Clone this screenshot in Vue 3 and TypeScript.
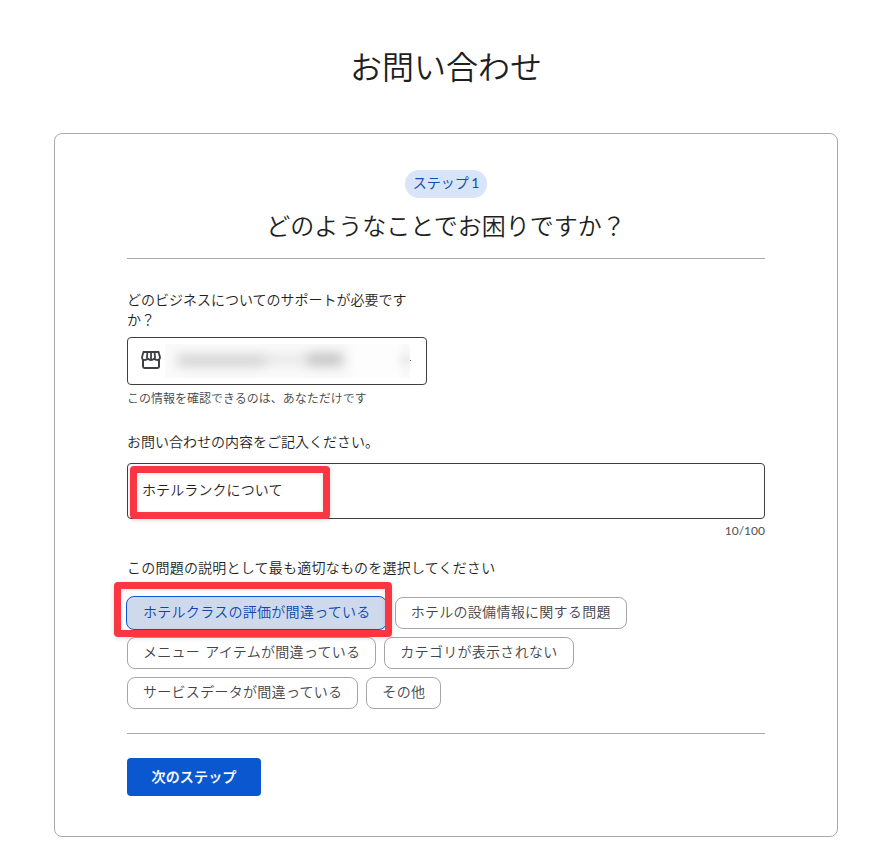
<script setup lang="ts">
import { ref } from 'vue'

const subject = ref<string>('ホテルランクについて')
const selected = ref<number>(0)
const topics: string[] = [
  'ホテルクラスの評価が間違っている',
  'ホテルの設備情報に関する問題',
  'メニュー アイテムが間違っている',
  'カテゴリが表示されない',
  'サービスデータが間違っている',
  'その他',
]
</script>

<template>
  <main class="page">
    <h1 class="title">お問い合わせ</h1>
    <section class="card">
      <header class="head">
        <span class="step">ステップ 1</span>
        <h2 class="question">どのようなことでお困りですか？</h2>
      </header>

      <div class="label business-label">どのビジネスについてのサポートが必要ですか？</div>
      <div class="select">
        <svg class="store" viewBox="0 0 20 18" width="20" height="18" fill="none" stroke="#3f4043">
          <path d="M2 8.5V15.6Q2 17 3.4 17H16.6Q18 17 18 15.6V8.5" stroke-width="2" />
          <path d="M2.5 1H17.5L19 6.2Q19 9 16.3 9Q14.3 9 13.2 7.6Q12 9 10 9Q8 9 6.8 7.6Q5.7 9 3.7 9Q1 9 1 6.2Z" stroke-width="1.8" />
          <path d="M6.4 1L5.9 7.5M10 1V8.5M13.6 1L14.1 7.5" stroke-width="1.8" />
        </svg>
        <div class="masked">
          <span class="smear first"></span>
          <span class="smear middle"></span>
          <span class="smear last"></span>
          <span class="smear arrow"></span>
        </div>
        <i class="tip"></i>
      </div>
      <div class="helper">この情報を確認できるのは、あなただけです</div>

      <label class="label subject-label" for="subject">お問い合わせの内容をご記入ください。</label>
      <div class="field">
        <input id="subject" v-model="subject" class="input" maxlength="100" />
        <span class="mark field-mark"></span>
      </div>
      <div class="count">{{ subject.length }}/100</div>

      <div class="label topic-label">この問題の説明として最も適切なものを選択してください</div>
      <div class="topics">
        <button
          v-for="(topic, i) in topics"
          :key="topic"
          type="button"
          class="chip"
          :class="{ active: selected === i }"
          @click="selected = i"
        >{{ topic }}</button>
        <span class="mark chip-mark"></span>
      </div>

      <footer class="foot">
        <button type="button" class="next">次のステップ</button>
      </footer>
    </section>
  </main>
</template>

<style>
body {
  background: #fff;
}
</style>

<style scoped>
.page {
  box-sizing: border-box;
  width: 887px;
  height: 845px;
  padding: 43px 49px 8px 54px;
  overflow: hidden;
  font-family: Lato, "Noto Sans CJK JP", sans-serif;
  font-weight: 350;
  color: #1f1f1f;
}
.title {
  margin: 0 0 42px;
  font-size: 32px;
  line-height: 48px;
  font-weight: 350;
  text-align: center;
}
.card {
  box-sizing: border-box;
  height: 704px;
  border: 1px solid #a9a9ab;
  border-radius: 8px;
  padding: 36px 72px 0;
}
.head {
  display: flex;
  flex-direction: column;
  align-items: center;
  box-sizing: border-box;
  height: 89px;
  border-bottom: 1px solid #a9a9ab;
}
.step {
  height: 28px;
  padding: 0 8px;
  border-radius: 14px;
  background: #d8e4f8;
  color: #174ea6;
  font-size: 14px;
  font-weight: 400;
  line-height: 25px;
  word-spacing: -1px;
}
.question {
  margin: 11px 0 0;
  font-size: 24px;
  line-height: 33px;
  font-weight: 350;
}
.label {
  display: block;
  font-size: 14px;
  line-height: 20px;
}
.business-label {
  width: 290px;
  margin-top: 31px;
}
.select {
  box-sizing: border-box;
  display: flex;
  align-items: center;
  width: 300px;
  height: 48px;
  margin-top: 7px;
  padding: 0 0 2px 13px;
  border: 1px solid #3c4043;
  border-radius: 4px;
}
.masked {
  position: relative;
  width: 245px;
  height: 34px;
  margin: 2px 0 0 4px;
  background: linear-gradient(90deg, #fafafa 0 182px, #fdfdfd 190px 232px, #fafafa 240px);
  overflow: hidden;
}
.smear {
  position: absolute;
  background: #777;
  filter: blur(6px);
}
.first {
  left: 12px;
  top: 11px;
  width: 88px;
  height: 11px;
  opacity: 0.32;
}
.middle {
  left: 98px;
  top: 11px;
  width: 44px;
  height: 9px;
  opacity: 0.17;
}
.last {
  left: 142px;
  top: 9px;
  width: 36px;
  height: 13px;
  opacity: 0.42;
}
.arrow {
  left: 238px;
  top: 13px;
  width: 6px;
  height: 6px;
  opacity: 0.55;
}
.tip {
  width: 1px;
  height: 1px;
  background: #555;
}
.helper {
  margin-top: 5px;
  font-size: 12px;
  line-height: 18px;
  color: #444548;
}
.subject-label {
  margin-top: 24px;
}
.field {
  position: relative;
  margin-top: 11px;
}
.input {
  box-sizing: border-box;
  display: block;
  width: 100%;
  height: 56px;
  padding: 0 15px 4px 14px;
  border: 1px solid #3c4043;
  border-radius: 4px;
  background: transparent;
  font: inherit;
  font-size: 14px;
  letter-spacing: 0.1px;
  color: #1f1f1f;
  outline: none;
}
.mark {
  position: absolute;
  box-sizing: border-box;
  border: 7px solid #f93642;
  border-radius: 4px;
  box-shadow: 0 1px 5px rgba(0, 0, 0, 0.14), inset 0 1px 4px rgba(0, 0, 0, 0.12);
  pointer-events: none;
}
.field-mark {
  left: 3px;
  top: 3px;
  width: 200px;
  height: 53px;
}
.count {
  margin-top: 4px;
  font-size: 12px;
  font-weight: 400;
  line-height: 16px;
  text-align: right;
  color: #505154;
}
.topic-label {
  margin-top: 19px;
  letter-spacing: 0.22px;
}
.topics {
  position: relative;
  display: flex;
  flex-wrap: wrap;
  gap: 8px;
  margin-top: 19px;
}
.chip {
  box-sizing: border-box;
  height: 32px;
  padding: 0 15px 2px;
  border: 1px solid #a5a6a8;
  border-radius: 8px;
  background: transparent;
  font-family: inherit;
  font-size: 14px;
  font-weight: 350;
  line-height: 28px;
  letter-spacing: 0.29px;
  word-spacing: 1px;
  color: #444548;
}
.active {
  height: 34px;
  margin: -1px 0 -1px -1px;
  padding: 0 15px 2px 16px;
  border-color: #0b57d0;
  background: #ced9ec;
  color: #0f46ac;
}
.chip-mark {
  left: -13px;
  top: -15px;
  width: 278px;
  height: 55px;
}
.foot {
  margin-top: 24px;
  padding-top: 24px;
  border-top: 1px solid #a9a9ab;
}
.next {
  display: block;
  width: 134px;
  height: 38px;
  padding: 0 0 3px;
  border: 0;
  border-radius: 4px;
  background: #0b57d0;
  color: #fff;
  font-family: inherit;
  font-size: 14px;
  font-weight: 500;
  -webkit-text-stroke: 0.2px #fff;
  letter-spacing: 0.15px;
}
</style>
